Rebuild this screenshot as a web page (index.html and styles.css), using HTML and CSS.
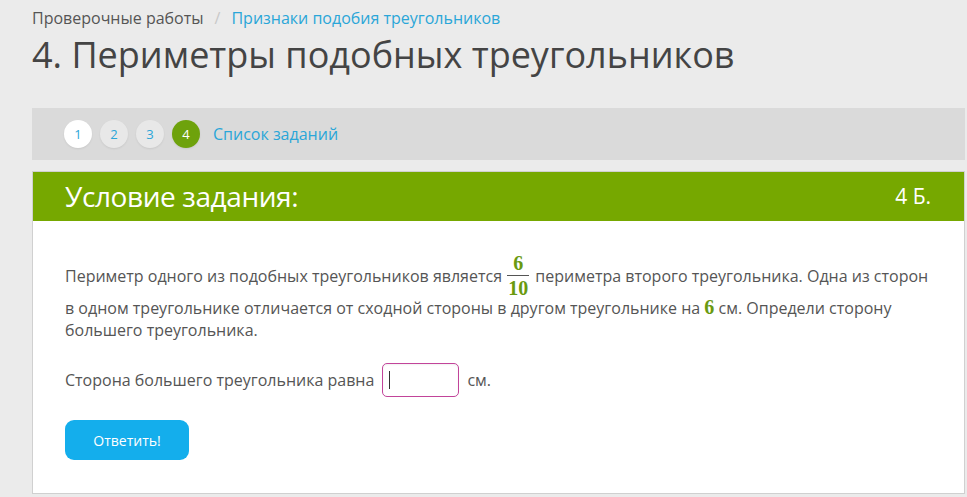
FILE: index.html
```html
<!DOCTYPE html>
<html lang="ru">
<head>
<meta charset="utf-8">
<link rel="stylesheet" href="styles.css">
</head>
<body>
<div class="page">
  <div class="crumbs"><span class="crumb">Проверочные работы</span><span class="sep">/</span><a class="crumb-link">Признаки подобия треугольников</a></div>
  <h1 class="title">4. Периметры подобных треугольников</h1>
  <div class="steps">
    <span class="step step-white">1</span>
    <span class="step">2</span>
    <span class="step">3</span>
    <span class="step step-active">4</span>
    <a class="steps-link">Список заданий</a>
  </div>
  <div class="panel">
    <div class="panel-head">
      <span class="panel-title">Условие задания:</span>
      <span class="panel-score">4 Б.</span>
    </div>
    <div class="panel-body">
      <p class="task">Периметр одного из подобных треугольников является <span class="frac"><span class="num">6</span><span class="den">10</span></span> периметра второго треугольника. Одна из сторон в одном треугольнике отличается от сходной стороны в другом треугольнике на <span class="mnum">6</span> см. Определи сторону большего треугольника.</p>
      <p class="answer">Сторона большего треугольника равна <span class="input"><span class="caret"></span></span> см.</p>
      <button class="btn">Ответить!</button>
    </div>
  </div>
</div>
</body>
</html>
```
FILE: styles.css
```css
html, body { margin: 0; padding: 0; }
body {
  background: #ebebeb;
  font-family: "Open Sans", "Liberation Sans", sans-serif;
  color: #555;
}
.page { padding: 0 2px 0 32px; }
.crumbs {
  padding-top: 7px;
  font-size: 16px;
  line-height: 22px;
  color: #555;
}
.sep { color: #c8c8c8; margin: 0 11px; }
.crumb-link { color: #2aa6d8; }
.title {
  margin: 1px 0 0;
  font-size: 36px;
  font-weight: 400;
  line-height: 50px;
  color: #444;
}
.steps {
  margin-top: 28px;
  height: 52px;
  background: #dadada;
  display: flex;
  align-items: center;
  padding-left: 32px;
  gap: 8px;
}
.step {
  width: 28px; height: 28px;
  border-radius: 50%;
  background: #e8e8e8;
  color: #2aa6d8;
  font-size: 13px;
  display: flex; align-items: center; justify-content: center;
  box-shadow: 0 1px 2px rgba(0,0,0,0.08);
}
.step-white { background: #fff; }
.step-active { background: #6ea20c; color: #fff; }
.steps-link { color: #2aa6d8; font-size: 16px; margin-left: 5px; }
.panel {
  margin-top: 11px;
  background: #fff;
  border: 1px solid #d0d0d0;
}
.panel-head {
  background: #76a800;
  height: 49px;
  display: flex;
  align-items: center;
  justify-content: space-between;
  padding: 0 33px 2px 32px;
  box-sizing: border-box;
  color: #fff;
}
.panel-title { font-size: 28px; letter-spacing: -0.4px; }
.panel-score { font-size: 21px; }
.panel-body { padding: 39px 28px 33px 32px; }
.task {
  margin: 0;
  font-size: 16px;
  line-height: 22px;
  color: #555;
}
.frac {
  display: inline-flex;
  flex-direction: column;
  align-items: center;
  vertical-align: middle;
  font-family: "Liberation Serif", "DejaVu Serif", serif;
  font-weight: bold;
  color: #6a9a10;
  font-size: 20px;
  line-height: 24px;
  margin: -9px 2px -4px 1px;
}
.num { padding: 0 1px; }
.den { border-top: 1px solid #555; padding: 0 1px; }
.mnum {
  font-family: "Liberation Serif", "DejaVu Serif", serif;
  font-weight: bold;
  color: #6a9a10;
  font-size: 20px;
}
.answer {
  margin: 22px 0 0;
  font-size: 16px;
  line-height: 34px;
  display: flex;
  align-items: center;
}
.input {
  display: inline-block;
  width: 75px; height: 32px;
  border: 1px solid #c2449a;
  border-radius: 5px;
  margin: 0 8px;
  position: relative;
  background: #fff;
  box-shadow: inset 0 1px 2px rgba(0,0,0,0.06);
}
.caret {
  position: absolute;
  left: 6px; top: 7px;
  width: 1px; height: 18px;
  background: #333;
}
.btn {
  display: block;
  margin-top: 23px;
  width: 124px; height: 40px;
  border: none;
  border-radius: 9px;
  background: #14aeec;
  color: #fff;
  font-family: "Open Sans", "Liberation Sans", sans-serif;
  font-size: 14px;
}
```
